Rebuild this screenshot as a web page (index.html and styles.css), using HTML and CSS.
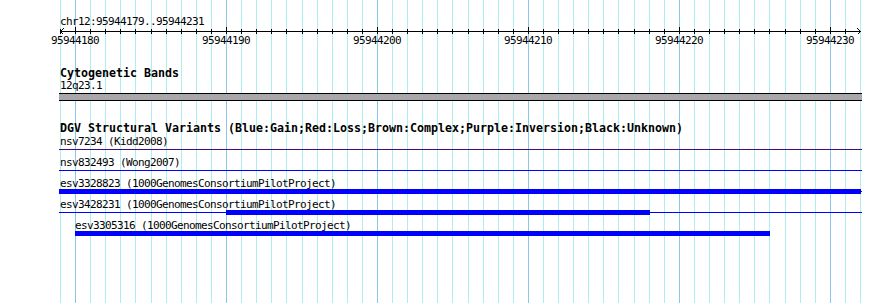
FILE: index.html
```html
<!DOCTYPE html>
<html lang="en">
<head>
<meta charset="utf-8">
<title>chr12:95944179..95944231</title>
<link rel="stylesheet" href="styles.css">
</head>
<body>
<div class="view">
  <svg class="grid" width="890" height="303" viewBox="0 0 890 303" aria-hidden="true">
    <path class="grid-minor" d="M60.5 0V303M90.5 0V303M105.5 0V303M120.5 0V303M135.5 0V303M151.5 0V303M166.5 0V303M181.5 0V303M196.5 0V303M211.5 0V303M241.5 0V303M256.5 0V303M271.5 0V303M286.5 0V303M302.5 0V303M317.5 0V303M332.5 0V303M347.5 0V303M362.5 0V303M392.5 0V303M407.5 0V303M422.5 0V303M437.5 0V303M452.5 0V303M468.5 0V303M483.5 0V303M498.5 0V303M513.5 0V303M543.5 0V303M558.5 0V303M573.5 0V303M588.5 0V303M603.5 0V303M618.5 0V303M634.5 0V303M649.5 0V303M664.5 0V303M694.5 0V303M709.5 0V303M724.5 0V303M739.5 0V303M754.5 0V303M769.5 0V303M785.5 0V303M800.5 0V303M815.5 0V303M845.5 0V303M860.5 0V303"/>
    <path class="grid-major" d="M75.5 0V303M226.5 0V303M377.5 0V303M528.5 0V303M679.5 0V303M830.5 0V303"/>
  </svg>

  <header class="ruler">
    <div class="loc">chr12:95944179..95944231</div>
    <svg class="scale" width="890" height="20" viewBox="0 0 890 20">
      <path class="axis" d="M60 4.5H861"/>
      <polyline class="axis" points="63.5,1.5 60.5,4.5 63.5,7.5"/>
      <polyline class="axis" points="857.5,1.5 860.5,4.5 857.5,7.5"/>
      <path class="axis" d="M60.5 2V7M90.5 2V7M105.5 2V7M120.5 2V7M135.5 2V7M151.5 2V7M166.5 2V7M181.5 2V7M196.5 2V7M211.5 2V7M241.5 2V7M256.5 2V7M271.5 2V7M286.5 2V7M302.5 2V7M317.5 2V7M332.5 2V7M347.5 2V7M362.5 2V7M392.5 2V7M407.5 2V7M422.5 2V7M437.5 2V7M452.5 2V7M468.5 2V7M483.5 2V7M498.5 2V7M513.5 2V7M543.5 2V7M558.5 2V7M573.5 2V7M588.5 2V7M603.5 2V7M618.5 2V7M634.5 2V7M649.5 2V7M664.5 2V7M694.5 2V7M709.5 2V7M724.5 2V7M739.5 2V7M754.5 2V7M769.5 2V7M785.5 2V7M800.5 2V7M815.5 2V7M845.5 2V7"/>
      <path class="axis" d="M75.5 0V7M226.5 0V7M377.5 0V7M528.5 0V7M679.5 0V7M830.5 0V7"/>
      <text class="tick-label" x="75" y="17">95944180</text>
      <text class="tick-label" x="226" y="17">95944190</text>
      <text class="tick-label" x="377" y="17">95944200</text>
      <text class="tick-label" x="528" y="17">95944210</text>
      <text class="tick-label" x="679" y="17">95944220</text>
      <text class="tick-label" x="830" y="17">95944230</text>
    </svg>
  </header>

  <section class="track cyto">
    <h2 class="track-title">Cytogenetic Bands</h2>
    <div class="label">12q23.1</div>
    <div class="band"></div>
  </section>

  <section class="track dgv">
    <h2 class="track-title">DGV Structural Variants (Blue:Gain;Red:Loss;Brown:Complex;Purple:Inversion;Black:Unknown)</h2>
    <div class="features">
      <div class="feature">
        <div class="label">nsv7234 (Kidd2008)</div>
        <div class="glyph line-purple"></div>
      </div>
      <div class="feature">
        <div class="label">nsv832493 (Wong2007)</div>
        <div class="glyph line-blue"></div>
      </div>
      <div class="feature">
        <div class="label">esv3328823 (1000GenomesConsortiumPilotProject)</div>
        <div class="glyph line-blue"><div class="bar" style="margin-left:0px;width:802px"></div></div>
      </div>
      <div class="feature">
        <div class="label">esv3428231 (1000GenomesConsortiumPilotProject)</div>
        <div class="glyph line-blue"><div class="bar" style="margin-left:167px;width:424px"></div></div>
      </div>
      <div class="feature">
        <div class="label" style="padding-left:16px">esv3305316 (1000GenomesConsortiumPilotProject)</div>
        <div class="glyph"><div class="bar" style="margin-left:16px;width:695px"></div></div>
      </div>
    </div>
  </section>
</div>
</body>
</html>
```

FILE: styles.css
```css
html, body {
  margin: 0;
  padding: 0;
  background: #ffffff;
}

.view {
  position: relative;
  width: 890px;
  height: 303px;
  overflow: hidden;
  font-family: "DejaVu Sans Mono", "Liberation Mono", monospace;
  font-size: 11px;
  letter-spacing: -0.62px;
  line-height: 11px;
  color: #000000;
}

.grid {
  position: absolute;
  left: 0;
  top: 0;
  z-index: 0;
  display: block;
}

.grid-minor {
  stroke: #aeeeee;
  stroke-width: 1;
  fill: none;
  shape-rendering: crispEdges;
}

.grid-major {
  stroke: #88c8ea;
  stroke-width: 1;
  fill: none;
  shape-rendering: crispEdges;
}

.ruler,
.track {
  position: relative;
  z-index: 1;
}

.loc {
  padding: 16px 0 0 60px;
  line-height: 11px;
  white-space: nowrap;
}

.scale {
  display: block;
}

.axis {
  stroke: #000000;
  stroke-width: 1;
  fill: none;
  shape-rendering: crispEdges;
}

.tick-label {
  font-family: "DejaVu Sans Mono", "Liberation Mono", monospace;
  font-size: 11px;
  letter-spacing: -0.62px;
  fill: #000000;
  text-anchor: middle;
}

.track {
  width: 803px;
  padding-left: 59px;
}

.cyto {
  margin-top: 20px;
}

.dgv {
  margin-top: 20px;
}

.track-title {
  margin: 0;
  padding-left: 1px;
  font-size: 11.63px;
  letter-spacing: 0;
  line-height: 14px;
  font-weight: bold;
  white-space: nowrap;
}

.cyto .track-title {
  line-height: 13px;
}

.label {
  padding-left: 1px;
  line-height: 11px;
  height: 11px;
  white-space: nowrap;
}

.band {
  margin-top: 2px;
  height: 8px;
  box-sizing: border-box;
  border-top: 1px solid #000000;
  border-bottom: 1px solid #000000;
  background: #aaa7aa;
}

.features {
  margin-top: 1px;
  display: flex;
  flex-direction: column;
}

.feature {
  height: 21px;
}

.glyph {
  height: 5px;
  display: flex;
}

.line-blue {
  background: linear-gradient(#0000ff, #0000ff) 0 2px / 100% 1px no-repeat;
}

.line-purple {
  background: linear-gradient(#3a1080, #3a1080) 0 2px / 100% 1px no-repeat;
}

.bar {
  height: 5px;
  background: #0000ff;
  flex: none;
}
```
